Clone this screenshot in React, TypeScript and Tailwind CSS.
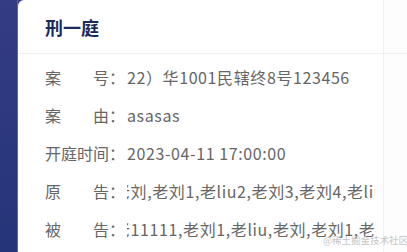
/**
 * 开庭信息卡片
 */
const font = { fontFamily: "'Noto Sans CJK SC', 'Noto Sans', sans-serif" };

interface Row {
  label: [string, string];
  value: string;
  shift?: number;
}

const rows: Row[] = [
  { label: ["案", "号："], value: "22）华1001民辖终8号123456" },
  { label: ["案", "由："], value: "asasas" },
  { label: ["开庭时间：", ""], value: "2023-04-11 17:00:00" },
  { label: ["原", "告："], value: "老刘,老刘1,老liu2,老刘3,老刘4,老liu,老刘5", shift: 13 },
  { label: ["被", "告："], value: "老11111,老刘1,老liu,老刘,老刘1,老liu,老刘", shift: 13 },
];

export default function App() {
  return (
    <div className="relative w-[407px] h-[252px] overflow-hidden flex bg-gradient-to-b from-[#343c84] to-[#253478]" style={font}>
      <div className="w-[18px] shrink-0 border-r border-[#5a68b0]" />
      <div className="flex-1 flex bg-white rounded-tl-md">
        {/* 卡片 */}
        <div className="w-[366px] shrink-0 border-r border-[#f0f0f0] flex flex-col">
          <div className="h-[54px] border-b border-[#f0f0f0] flex items-center pl-[27px]">
            <h3 className="text-[18px] font-bold text-[#1b2a5e] leading-none">刑一庭</h3>
          </div>
          <div className="pt-[4px] pl-[27px]">
            {rows.map((r) => (
              <div key={r.label[0] + r.label[1]} className="h-[38px] flex items-center text-[16px] text-[#666]">
                <div className="w-[80px] shrink-0 flex justify-between">
                  <span>{r.label[0]}</span>
                  {r.label[1] && <span>{r.label[1]}</span>}
                </div>
                <div className="ml-[2px] w-[248px] overflow-hidden whitespace-nowrap tracking-[0.6px]">
                  <span className="inline-block" style={{ marginLeft: r.shift ? -r.shift : 0 }}>{r.value}</span>
                </div>
              </div>
            ))}
          </div>
        </div>
        <div className="flex-1 bg-[#fdfdfd] relative">
          <div className="absolute top-[53px] left-0 right-0 border-b border-[#f0f0f0]" />
        </div>
      </div>
      <span className="absolute left-[323px] top-[236px] text-[9.5px] leading-none text-[#c4c4c4] whitespace-nowrap">@稀土掘金技术社区</span>
    </div>
  );
}
